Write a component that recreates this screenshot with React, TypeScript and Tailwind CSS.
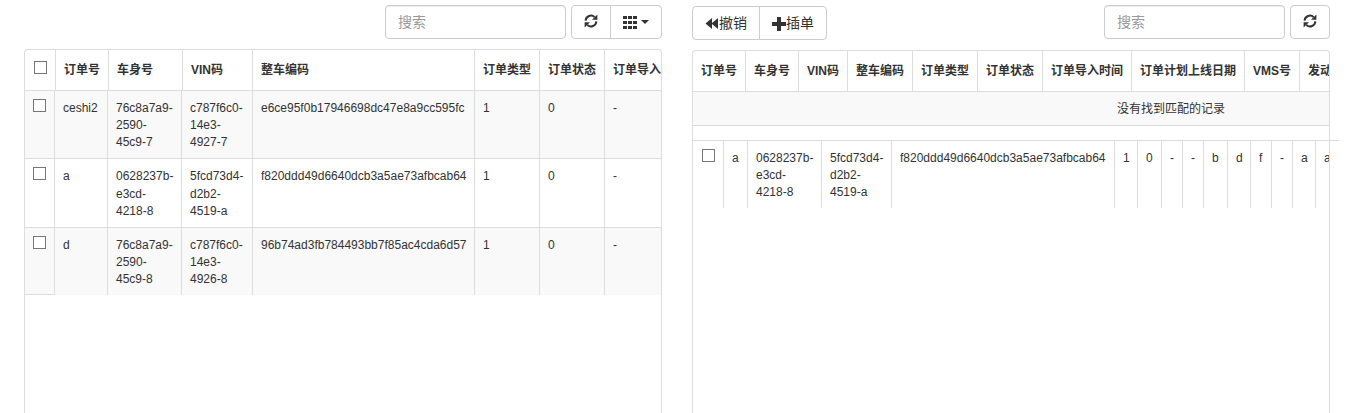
const FONT = "font-['Liberation_Sans','Noto_Sans_CJK_SC',sans-serif]"

const leftHead = ["订单号", "车身号", "VIN码", "整车编码", "订单类型", "订单状态", "订单导入"]

const leftRows = [
  ["ceshi2", "76c8a7a9-2590-45c9-7", "c787f6c0-14e3-4927-7", "e6ce95f0b17946698dc47e8a9cc595fc", "1", "0", "-"],
  ["a", "0628237b-e3cd-4218-8", "5fcd73d4-d2b2-4519-a", "f820ddd49d6640dcb3a5ae73afbcab64", "1", "0", "-"],
  ["d", "76c8a7a9-2590-45c9-8", "c787f6c0-14e3-4926-8", "96b74ad3fb784493bb7f85ac4cda6d57", "1", "0", "-"],
]

const rightHead = ["订单号", "车身号", "VIN码", "整车编码", "订单类型", "订单状态", "订单导入时间", "订单计划上线日期", "VMS号", "发动"]

const rightRow = ["a", "0628237b-e3cd-4218-8", "5fcd73d4-d2b2-4519-a", "f820ddd49d6640dcb3a5ae73afbcab64", "1", "0", "-", "-", "b", "d", "f", "-", "a", "a"]

//////////////////////////////////////////////////////
// ICONS
//////////////////////////////////////////////////////

function RefreshIcon() {
  return (
    <svg viewBox="0 0 14 14" className="w-[14px] h-[14px]" fill="none" stroke="#333" strokeWidth="2">
      <path d="M1.6 6.6 A5.4 5.4 0 0 1 10.6 3" />
      <path d="M12.4 7.4 A5.4 5.4 0 0 1 3.4 11" />
      <path d="M13.4 0.4 V5.8 H8 Z" fill="#333" stroke="none" />
      <path d="M0.6 13.6 V8.2 H6 Z" fill="#333" stroke="none" />
    </svg>
  )
}

function GridIcon() {
  const cells = [0, 5, 10]
  return (
    <svg viewBox="0 0 14 14" className="w-[14px] h-[14px]" fill="#333">
      {cells.map((y) =>
        cells.map((x) => <rect key={`${x}-${y}`} x={x} y={y + 1} width="4" height="3" />)
      )}
    </svg>
  )
}

function BackIcon() {
  return (
    <svg viewBox="0 0 14 14" className="w-[14px] h-[14px] mt-[2px]" fill="#333">
      <path d="M0.5 6.5 L7 1 V12 Z" />
      <path d="M6.5 6.5 L13 1 V12 Z" />
    </svg>
  )
}

function PlusIcon() {
  return (
    <svg viewBox="0 0 14 14" className="w-[14px] h-[14px] mt-[2px]" fill="#333">
      <path d="M5 0 H9 V5 H14 V9 H9 V14 H5 V9 H0 V5 H5 Z" />
    </svg>
  )
}

function Check() {
  return <input type="checkbox" className="block appearance-none w-[13px] h-[13px] border border-[#767676] bg-white" />
}

function Search() {
  return (
    <input
      placeholder="搜索"
      className="w-[181px] h-[34px] px-3 text-sm text-[#555] border border-[#ccc] rounded shadow-[inset_0_1px_1px_rgba(0,0,0,0.075)] placeholder:text-[#999] outline-none"
    />
  )
}

const btn = "flex items-center justify-center h-[34px] text-sm text-[#333] bg-white border border-[#ccc]"

export default function App() {
  return (
    <div className={`${FONT} flex gap-[30px] pl-6 h-[413px] overflow-hidden bg-white text-xs text-[#333] leading-[17.14px]`}>

      {/* LEFT */}
      <div className="w-[638px] pt-[5px]">
        <div className="flex justify-end gap-[5px] h-[34px]">
          <Search />
          <div className="flex">
            <button className={`${btn} w-10 rounded-l pb-[2px]`}><RefreshIcon /></button>
            <button className={`${btn} w-[52px] -ml-px rounded-r gap-1`}>
              <GridIcon />
              <span className="border-x-4 border-x-transparent border-t-4 border-t-[#333]" />
            </button>
          </div>
        </div>

        <div className="mt-[10px] h-[364px] border border-b-0 border-[#ddd] rounded-t overflow-hidden">
          <table className="table-fixed w-[636px] border-separate border-spacing-0">
            <colgroup>
              <col className="w-[31px]" />
              <col className="w-[53px]" />
              <col className="w-[74px]" />
              <col className="w-[70px]" />
              <col className="w-[222px]" />
              <col className="w-[65px]" />
              <col className="w-[65px]" />
              <col />
            </colgroup>
            <thead>
              <tr className="h-[41px]">
                <th className="border-b border-r border-[#ddd] pl-[9px]"><div className="-mt-[5px]"><Check /></div></th>
                {leftHead.map((h, i) => (
                  <th key={h} className={`border-b border-[#ddd] px-2 pt-[2px] text-left whitespace-nowrap font-bold ${i < 6 ? "border-r" : ""}`}>{h}</th>
                ))}
              </tr>
            </thead>
          </table>
          <table className="table-fixed w-[636px] border-separate border-spacing-0">
            <colgroup>
              <col className="w-[30px]" />
              <col className="w-[53px]" />
              <col className="w-[74px]" />
              <col className="w-[71px]" />
              <col className="w-[222px]" />
              <col className="w-[65px]" />
              <col className="w-[65px]" />
              <col />
            </colgroup>
            <tbody>
              {leftRows.map((row, r) => (
                <tr key={r} className={r % 2 === 0 ? "bg-[#f9f9f9]" : "bg-white"}>
                  <td className="align-top border-b border-r border-[#ddd] pt-[8px] pl-2"><Check /></td>
                  {row.map((c, i) => (
                    <td key={i} className={`align-top pt-[9px] px-2 pb-[7px] border-[#ddd] ${r < 2 ? "border-b" : ""} ${i < 6 ? "border-r" : ""}`}>{c}</td>
                  ))}
                </tr>
              ))}
            </tbody>
          </table>
        </div>
      </div>

      {/* RIGHT */}
      <div className="w-[638px] pt-[5px]">
        <div className="flex justify-between h-[35px]">
          <div className="flex mt-px">
            <button className={`${btn} w-[68px] rounded-l`}><BackIcon />撤销</button>
            <button className={`${btn} w-[68px] -ml-px rounded-r`}><PlusIcon />插单</button>
          </div>
          <div className="flex gap-[5px]">
            <Search />
            <button className={`${btn} w-10 rounded pb-[2px]`}><RefreshIcon /></button>
          </div>
        </div>

        <div className="mt-[10px] h-[364px] border border-b-0 border-[#ddd] rounded-t">
          <div className="overflow-hidden">
            <table className="table-fixed w-[956px] border-separate border-spacing-0">
              <colgroup>
                <col className="w-[53px]" />
                <col className="w-[53px]" />
                <col className="w-[49px]" />
                <col className="w-[65px]" />
                <col className="w-[65px]" />
                <col className="w-[65px]" />
                <col className="w-[89px]" />
                <col className="w-[113px]" />
                <col className="w-[55px]" />
                <col />
              </colgroup>
              <thead>
                <tr className="h-[41px]">
                  {rightHead.map((h, i) => (
                    <th key={h} className={`border-b border-[#ddd] px-2 pt-[2px] text-left whitespace-nowrap font-bold ${i < 9 ? "border-r" : ""}`}>{h}</th>
                  ))}
                </tr>
              </thead>
              <tbody>
                <tr className="bg-[#f9f9f9] h-[34px]">
                  <td colSpan={10} className="border-b border-[#ddd] pt-[2px] text-center">没有找到匹配的记录</td>
                </tr>
              </tbody>
            </table>
          </div>

          <div className="mt-[14px] w-[646px] border-t border-[#ddd]">
            <div className="w-[636px] overflow-hidden">
              <table className="table-fixed w-[636px] border-separate border-spacing-0">
                <colgroup>
                  <col className="w-[31px]" />
                  <col className="w-[24px]" />
                  <col className="w-[74px]" />
                  <col className="w-[70px]" />
                  <col className="w-[223px]" />
                  <col className="w-[23px]" />
                  <col className="w-[24px]" />
                  <col className="w-[21px]" />
                  <col className="w-[21px]" />
                  <col className="w-[24px]" />
                  <col className="w-[23px]" />
                  <col className="w-[21px]" />
                  <col className="w-[21px]" />
                  <col className="w-[23px]" />
                  <col />
                </colgroup>
                <tbody>
                  <tr>
                    <td className="align-top border-r border-[#ddd] pt-[8px] pl-[9px]"><Check /></td>
                    {rightRow.map((c, i) => (
                      <td key={i} className={`align-top pt-[9px] px-2 pb-[7px] border-[#ddd] ${i < 13 ? "border-r" : ""}`}>{c}</td>
                    ))}
                  </tr>
                </tbody>
              </table>
            </div>
          </div>
        </div>
      </div>

    </div>
  )
}
